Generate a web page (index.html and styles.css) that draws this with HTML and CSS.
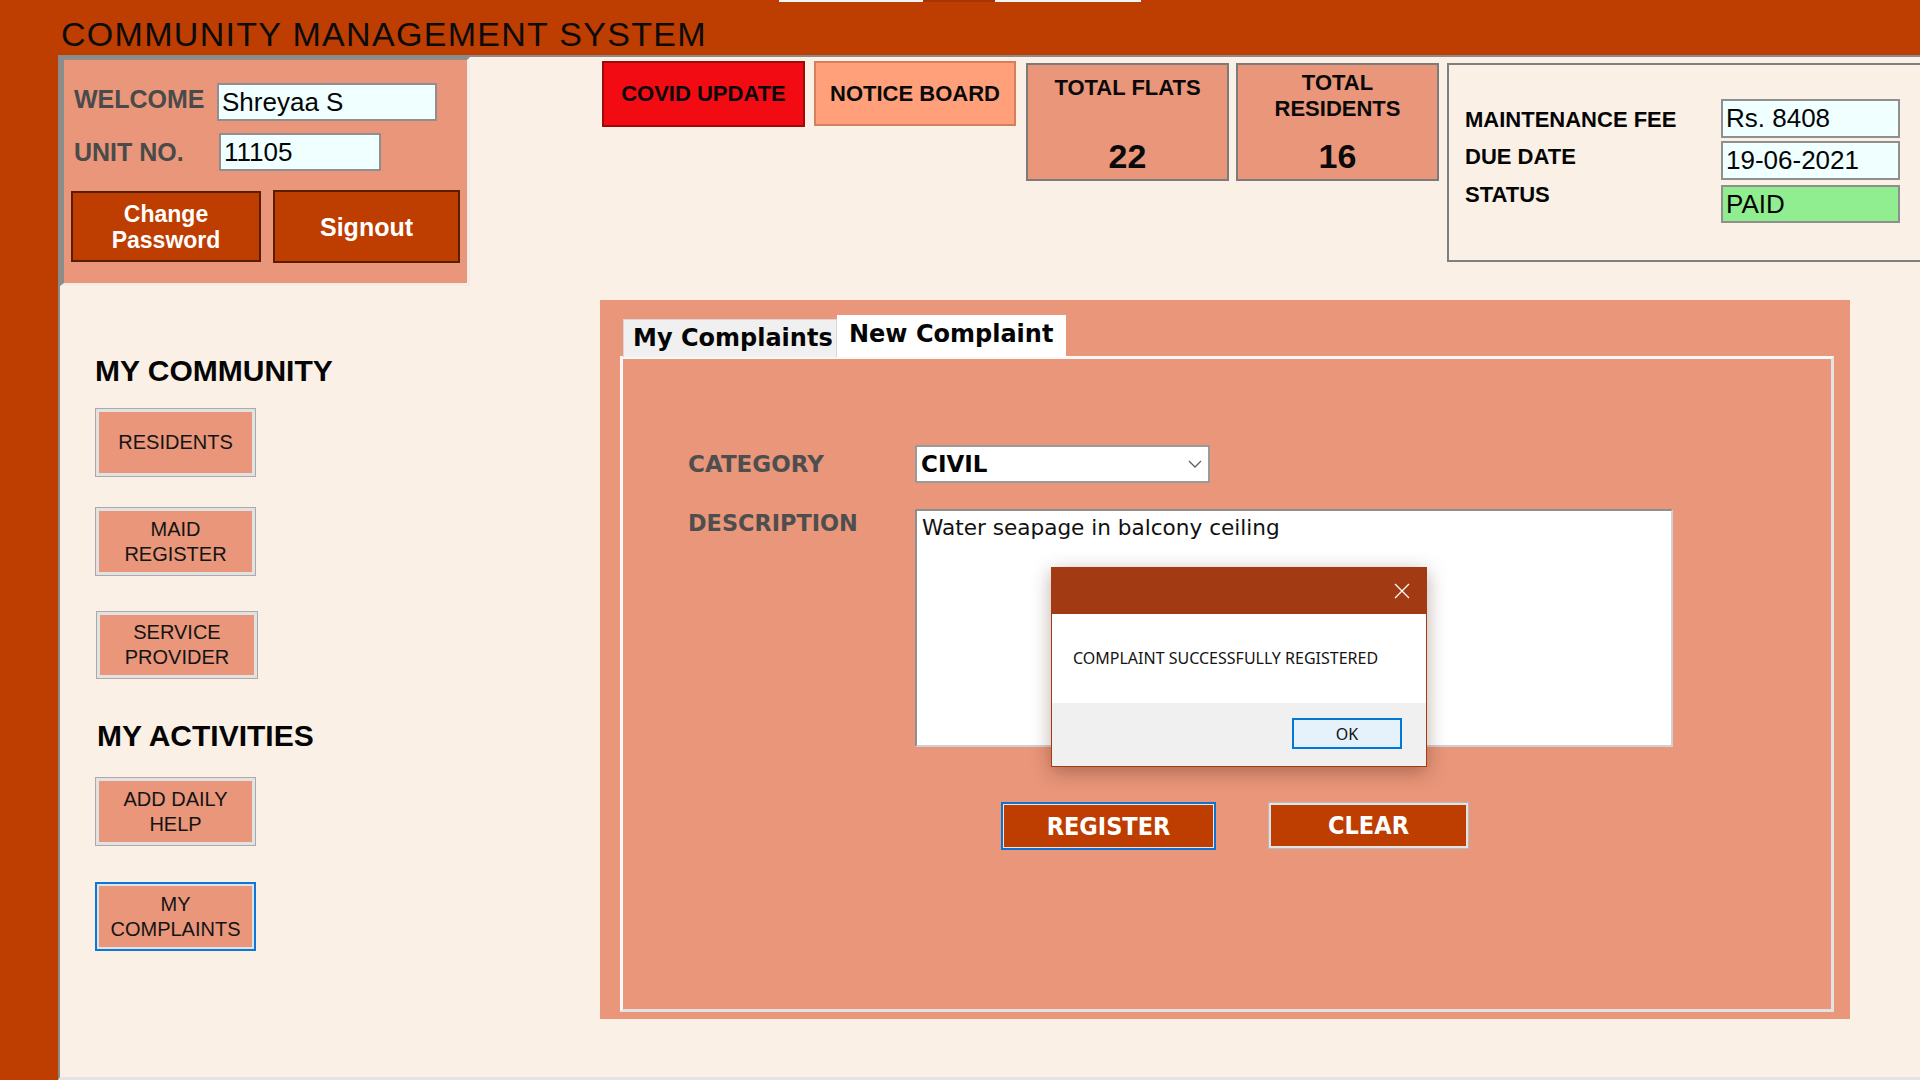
FILE: index.html
```html
<!DOCTYPE html>
<html lang="en">
<head>
<meta charset="utf-8">
<title>Community Management System</title>
<link rel="stylesheet" href="styles.css">
</head>
<body>
<div class="app">
  <header class="titlebar">
    <div class="topmarks"><span class="mark light"></span><span class="mark dark"></span><span class="mark light wide"></span></div>
    <h1 class="title">COMMUNITY MANAGEMENT SYSTEM</h1>
  </header>
  <div class="strip"></div>
  <main class="content">
    <section class="leftcol">
      <div class="welcome">
        <div class="wrow r1">
          <span class="wlabel">WELCOME</span>
          <div class="field name">Shreyaa S</div>
        </div>
        <div class="wrow r2">
          <span class="wlabel">UNIT NO.</span>
          <div class="field unit">11105</div>
        </div>
        <div class="wbtns">
          <button class="dark-btn change">Change<br>Password</button>
          <button class="dark-btn signout">Signout</button>
        </div>
      </div>
      <nav class="nav">
        <h2 class="navhead">MY COMMUNITY</h2>
        <button class="navbtn residents-btn">RESIDENTS</button>
        <button class="navbtn maid-btn">MAID<br>REGISTER</button>
        <button class="navbtn service-btn">SERVICE<br>PROVIDER</button>
        <h2 class="navhead activities">MY ACTIVITIES</h2>
        <button class="navbtn daily-btn">ADD DAILY<br>HELP</button>
        <button class="navbtn complaints-btn focused">MY<br>COMPLAINTS</button>
      </nav>
    </section>
    <section class="rightcol">
      <div class="toprow">
        <button class="tile covid">COVID UPDATE</button>
        <button class="tile notice">NOTICE BOARD</button>
        <div class="stat flats">
          <div class="stat-label">TOTAL FLATS</div>
          <div class="stat-num">22</div>
        </div>
        <div class="stat residents">
          <div class="stat-label">TOTAL<br>RESIDENTS</div>
          <div class="stat-num">16</div>
        </div>
        <div class="fees">
          <div class="fee-labels">
            <span class="fee-label">MAINTENANCE FEE</span>
            <span class="fee-label due">DUE DATE</span>
            <span class="fee-label status">STATUS</span>
          </div>
          <div class="fee-boxes">
            <div class="field fee">Rs. 8408</div>
            <div class="field fee date">19-06-2021</div>
            <div class="field fee paid">PAID</div>
          </div>
        </div>
      </div>
      <div class="complaints">
        <div class="tabs">
          <div class="tab">My Complaints</div>
          <div class="tab active">New Complaint</div>
        </div>
        <div class="page">
          <div class="form">
            <span class="flabel cat">CATEGORY</span>
            <div class="combo">
              <span class="combo-text">CIVIL</span>
              <svg class="chev" width="14" height="8" viewBox="0 0 14 8"><path d="M1 1 L7 7 L13 1" fill="none" stroke="#606060" stroke-width="1.3"/></svg>
            </div>
            <span class="flabel desc">DESCRIPTION</span>
            <div class="textarea">Water seapage in balcony ceiling</div>
            <div class="actions">
              <button class="act register">REGISTER</button>
              <button class="act clear">CLEAR</button>
            </div>
          </div>
        </div>
      </div>
    </section>
  </main>
  <div class="dialog">
    <div class="dlg-title">
      <svg class="dlg-close" width="16" height="16" viewBox="0 0 16 16"><path d="M1 1 L15 15 M15 1 L1 15" stroke="#ffffff" stroke-width="1.3" fill="none"/></svg>
    </div>
    <div class="dlg-body">COMPLAINT SUCCESSFULLY REGISTERED</div>
    <div class="dlg-foot"><button class="ok">OK</button></div>
  </div>
</div>
</body>
</html>
```
FILE: styles.css
```css
* { box-sizing: border-box; }
html, body { margin: 0; padding: 0; }
body {
  width: 1920px;
  height: 1080px;
  overflow: hidden;
  background: #faf0e6;
  font-family: "Liberation Sans", Arial, sans-serif;
}
button { font-family: inherit; padding: 0; margin: 0; cursor: default; }

.app {
  position: relative;
  width: 1920px;
  height: 1080px;
  display: grid;
  grid-template-columns: 58px 1fr;
  grid-template-rows: 55px 1fr;
  background: #be3d00;
}

/* header */
.titlebar {
  grid-column: 1 / 3;
  background: #be3d00;
  display: flex;
  flex-direction: column;
}
.topmarks { display: flex; height: 2px; margin-left: 779px; }
.mark { display: block; height: 2px; }
.mark.light { width: 144px; background: #f3f3f3; }
.mark.dark { width: 72px; background: #a83400; }
.mark.wide { width: 146px; }
.title {
  margin: 15px 0 0 61px;
  font-size: 34px;
  line-height: 34px;
  font-weight: 400;
  letter-spacing: 1.3px;
  color: #0c0c0c;
}
.strip { background: #be3d00; }

.content {
  background: #faf0e6;
  border-top: 2px solid #8a8a8a;
  border-left: 2px solid #8a8a8a;
  border-bottom: 3px solid #e4e4e4;
  display: grid;
  grid-template-columns: 540px 1fr;
  overflow: hidden;
}

/* left column */
.leftcol { display: flex; flex-direction: column; align-items: flex-start; }
.welcome {
  width: 410px;
  height: 229px;
  background: #e9967a;
  border-top: 3px solid #8d8d8d;
  border-left: 4px solid #8d8d8d;
  border-right: 3px solid #f4ede7;
  border-bottom: 3px solid #f4ede7;
  padding: 23px 0 0 10px;
}
.wrow { display: flex; align-items: center; }
.wrow.r2 { margin-top: 12px; }
.wlabel {
  width: 143px;
  font-size: 25px;
  line-height: 30px;
  font-weight: 700;
  color: #4a4a4a;
}
.r1 .wlabel { margin-bottom: 6px; }
.field {
  background: #f0ffff;
  border: 2px solid #8f8f8f;
  color: #050505;
  font-size: 26px;
  line-height: 34px;
  padding-left: 3px;
  white-space: nowrap;
}
.field.name { width: 220px; height: 38px; }
.field.unit { width: 162px; height: 38px; margin-left: 2px; }
.wbtns { display: flex; align-items: center; gap: 12px; margin: 19px 0 0 -3px; }
.dark-btn {
  background: #be3d00;
  border: 2px solid #5a1d00;
  color: #ffffff;
  font-weight: 700;
  text-align: center;
}
.dark-btn.change { width: 190px; height: 71px; font-size: 23px; line-height: 26px; }
.dark-btn.signout { width: 187px; height: 73px; font-size: 25px; line-height: 30px; }

.nav { padding-left: 35px; display: flex; flex-direction: column; align-items: flex-start; }
.navhead {
  margin: 70px 0 0 0;
  font-size: 30px;
  line-height: 30px;
  font-weight: 700;
  color: #050505;
}
.navhead.activities { margin: 42px 0 0 2px; }
.navbtn {
  width: 161px;
  height: 69px;
  background: #e9967a;
  border: 1px solid #aaaaaa;
  box-shadow: inset 0 0 0 3px #e2e2e2;
  color: #141414;
  font-size: 20px;
  line-height: 25px;
  text-align: center;
}
.residents-btn { margin-top: 22px; }
.maid-btn { margin-top: 30px; }
.service-btn { margin-top: 35px; margin-left: 1px; width: 162px; height: 68px; }
.daily-btn { margin-top: 26px; }
.complaints-btn { margin-top: 36px; }
.navbtn.focused { border: 2px solid #0a78d8; box-shadow: inset 0 0 0 2px #e2e2e2; }

/* right column */
.rightcol { display: flex; flex-direction: column; align-items: flex-start; }
.toprow { display: flex; align-items: flex-start; margin-top: 4px; }
.tile {
  font-size: 22px;
  font-weight: 700;
  color: #0a0a0a;
  text-align: center;
}
.covid { margin-left: 2px; width: 203px; height: 66px; background: #f20b13; border: 2px solid #9c0a0a; }
.notice { margin-left: 9px; width: 202px; height: 65px; background: #ffa07a; border: 2px solid #d4805e; }
.stat {
  margin-top: 2px;
  width: 203px;
  height: 118px;
  border: 2px solid #7b7b7b;
  background: #e9967a;
  display: flex;
  flex-direction: column;
  align-items: center;
  padding-bottom: 6px;
  text-align: center;
  color: #0a0a0a;
}
.stat.flats { margin-left: 10px; padding-top: 10px; }
.stat.residents { margin-left: 7px; padding-top: 5px; }
.stat-label { font-size: 22px; line-height: 26px; font-weight: 700; }
.stat-num { margin-top: auto; font-size: 34px; line-height: 34px; font-weight: 700; }

.fees {
  margin: 2px 0 0 8px;
  width: 500px;
  height: 199px;
  border: 2px solid #7f7f7f;
  display: flex;
  padding-left: 16px;
}
.fee-labels { width: 256px; display: flex; flex-direction: column; align-items: flex-start; padding-top: 44px; }
.fee-label { font-size: 22px; line-height: 22px; font-weight: 700; color: #050505; white-space: nowrap; }
.fee-label.due { margin-top: 15px; }
.fee-label.status { margin-top: 16px; }
.fee-boxes { display: flex; flex-direction: column; padding-top: 34px; }
.field.fee { width: 179px; height: 39px; line-height: 35px; }
.field.date { margin-top: 3px; }
.field.paid { margin-top: 5px; height: 38px; background: #90ee90; }

/* complaints */
.complaints {
  margin-top: 38px;
  width: 1250px;
  height: 719px;
  background: #e9967a;
  padding: 15px 16px 7px 20px;
  display: flex;
  flex-direction: column;
}
.tabs {
  display: flex;
  align-items: flex-end;
  height: 42px;
  padding-left: 3px;
  position: relative;
  z-index: 2;
  margin-bottom: -1px;
  font-family: "DejaVu Sans", sans-serif;
  font-weight: 700;
  font-size: 24px;
  color: #050505;
}
.tab {
  width: 214px;
  height: 38px;
  background: #f0f0f0;
  border: 1px solid #d7d7d7;
  border-bottom: none;
  padding-left: 9px;
  line-height: 36px;
  white-space: nowrap;
  overflow: hidden;
}
.tab.active {
  width: 229px;
  height: 42px;
  background: #ffffff;
  border: none;
  padding-left: 12px;
  line-height: 38px;
}
.page {
  flex: 1;
  background: #e9967a;
  border-style: solid;
  border-width: 3px;
  border-color: #f8f8f8 #e2e2e2 #e2e2e2 #f8f8f8;
  position: relative;
  z-index: 1;
}
.form {
  display: grid;
  grid-template-columns: 227px auto;
  justify-items: start;
  padding: 86px 0 0 65px;
}
.flabel {
  font-family: "DejaVu Sans", sans-serif;
  font-weight: 700;
  font-size: 23px;
  line-height: 24px;
  color: #4e4e4e;
}
.flabel.cat { align-self: center; }
.flabel.desc { align-self: start; margin-top: 28px; font-size: 22.4px; }
.combo {
  width: 295px;
  height: 38px;
  background: #ffffff;
  border: 2px solid #9a9a9a;
  display: flex;
  align-items: center;
  justify-content: space-between;
  padding: 0 6px 0 4px;
}
.combo-text {
  font-family: "DejaVu Sans", sans-serif;
  font-weight: 700;
  font-size: 23px;
  color: #050505;
}
.textarea {
  margin-top: 26px;
  width: 758px;
  height: 238px;
  background: #ffffff;
  border: 2px solid #8e8e8e;
  border-right-color: #d0d0d0;
  border-bottom-color: #d0d0d0;
  padding: 4px 5px;
  font-family: "DejaVu Sans", sans-serif;
  font-size: 21.6px;
  line-height: 26px;
  color: #111111;
}
.actions {
  grid-column: 2;
  margin: 55px 0 0 86px;
  display: flex;
  align-items: flex-start;
  gap: 52px;
}
.act {
  background: #be3d00;
  color: #ffffff;
  font-family: "DejaVu Sans Condensed", "DejaVu Sans", sans-serif;
  font-stretch: condensed;
  font-weight: 700;
  font-size: 25px;
}
.act.register { width: 215px; height: 48px; border: 2px solid #0a74d6; box-shadow: inset 0 0 0 1px #f3e4dc; }
.act.clear { width: 201px; height: 47px; border: 1px solid #b9b9b9; box-shadow: inset 0 0 0 2px #e2e2e2; }

/* message box */
.dialog {
  position: absolute;
  left: 1051px;
  top: 567px;
  width: 376px;
  height: 200px;
  border: 1px solid #a23a13;
  background: #ffffff;
  box-shadow: 0 5px 18px rgba(60, 20, 0, 0.35);
  display: flex;
  flex-direction: column;
  font-family: "Noto Sans", "Open Sans", sans-serif;
  z-index: 10;
}
.dlg-title {
  height: 46px;
  background: #a23a13;
  display: flex;
  justify-content: flex-end;
  align-items: center;
  padding-right: 16px;
}
.dlg-body {
  height: 89px;
  padding: 33px 0 0 21px;
  font-size: 16px;
  line-height: 22px;
  color: #141414;
  white-space: nowrap;
}
.dlg-foot {
  flex: 1;
  background: #f0f0f0;
  display: flex;
  justify-content: flex-end;
  align-items: flex-start;
  padding: 15px 24px 0 0;
}
.ok {
  width: 110px;
  height: 31px;
  border: 2px solid #0078d7;
  background: #e5f1fb;
  font-family: "Noto Sans", "Open Sans", sans-serif;
  font-size: 16px;
  color: #111111;
}
```
